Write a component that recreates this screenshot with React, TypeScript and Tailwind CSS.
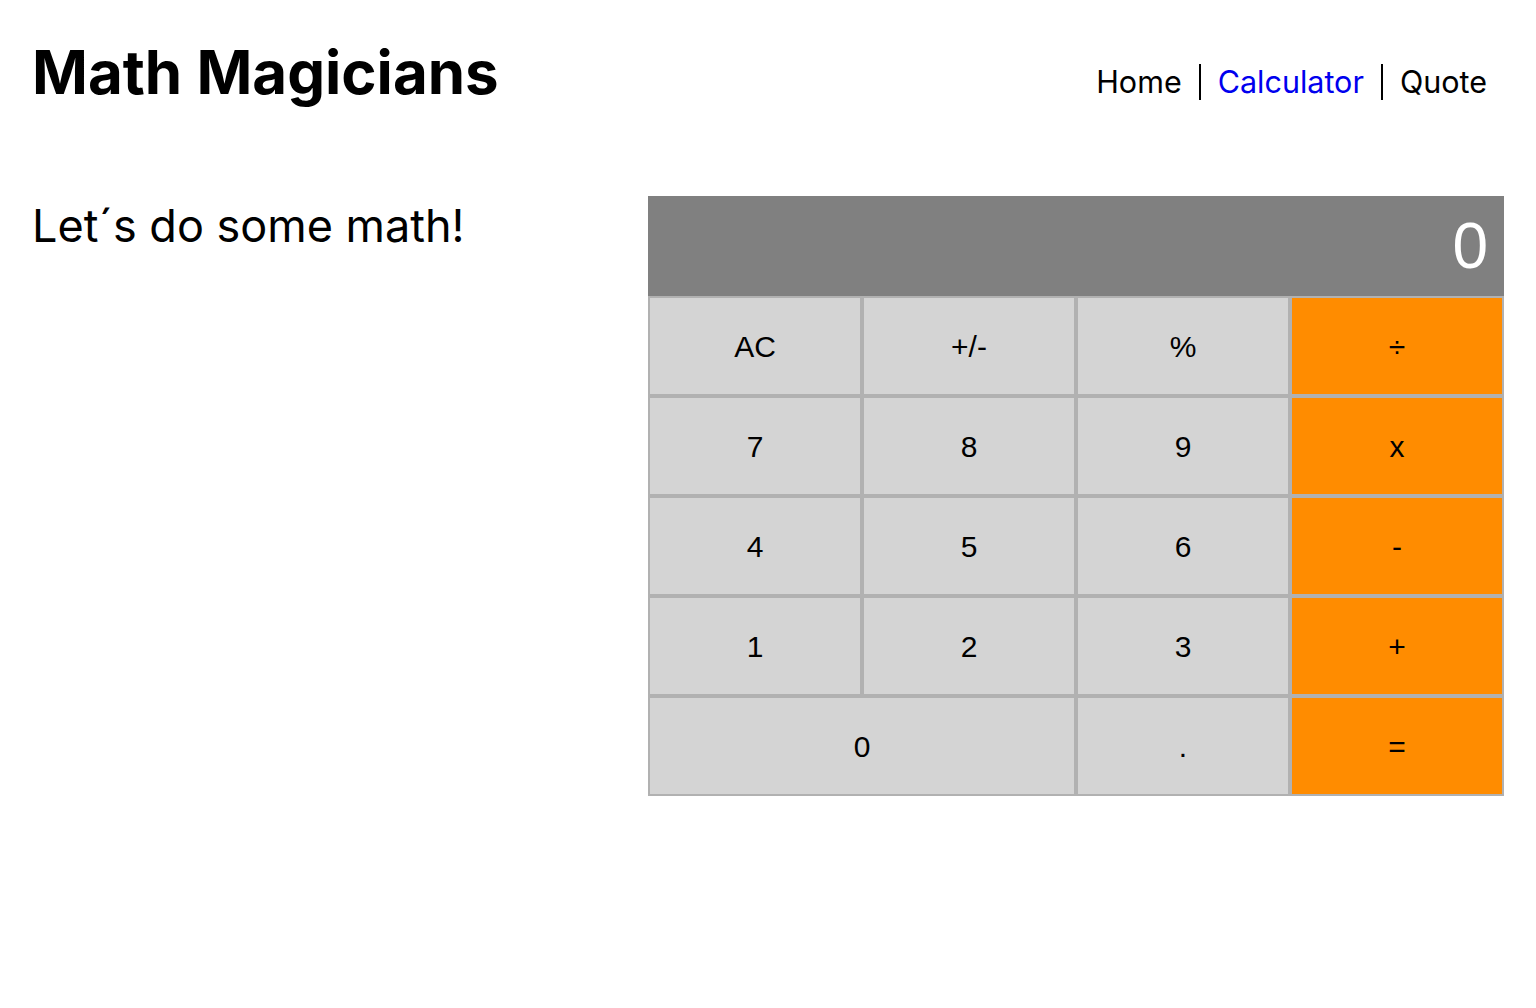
const keys: { label: string; wide?: boolean; op?: boolean }[] = [
  { label: "AC" },
  { label: "+/-" },
  { label: "%" },
  { label: "÷", op: true },
  { label: "7" },
  { label: "8" },
  { label: "9" },
  { label: "x", op: true },
  { label: "4" },
  { label: "5" },
  { label: "6" },
  { label: "-", op: true },
  { label: "1" },
  { label: "2" },
  { label: "3" },
  { label: "+", op: true },
  { label: "0", wide: true },
  { label: "." },
  { label: "=", op: true },
];

export default function App() {
  return (
    <div className="min-h-screen bg-white px-8 text-black [font-family:Inter,'Noto_Sans',sans-serif]">
      <header className="flex items-start justify-between pt-[34px]">
        <h1 className="text-[60px] font-bold leading-[76px]">Math Magicians</h1>
        <nav className="mt-[30px] mr-[17px] flex items-center text-[30.5px] leading-[36px]">
          <NavLink label="Home" />
          <NavLink label="Calculator" active border />
          <NavLink label="Quote" border last />
        </nav>
      </header>

      <main className="mt-[86px] flex justify-between">
        <h2 className="text-[45px] leading-[60px]">Let´s do some math!</h2>
        <Calculator />
      </main>
    </div>
  );
}

function NavLink({
  label,
  active,
  border,
  last,
}: {
  label: string;
  active?: boolean;
  border?: boolean;
  last?: boolean;
}) {
  return (
    <a
      href="#"
      className={`${border ? "border-l-2 border-black" : ""} ${last ? "pl-[17px]" : "px-[17px]"} ${
        active ? "text-[#0000ee]" : "text-black"
      }`}
    >
      {label}
    </a>
  );
}

function Calculator() {
  return (
    <div className="w-[856px] [font-family:'Liberation_Sans',Arial,sans-serif]">
      <div className="flex h-[100px] items-center justify-end bg-[#808080] pr-[16px] text-[64px] text-white">
        0
      </div>
      <div className="grid grid-cols-4">
        {keys.map((k) => (
          <button
            key={k.label}
            className={`flex h-[100px] items-center justify-center border-2 border-[#b1b1b1] text-[30px] text-black ${
              k.wide ? "col-span-2" : ""
            } ${k.op ? "bg-[#ff8c00]" : "bg-[#d4d4d4]"}`}
          >
            {k.label}
          </button>
        ))}
      </div>
    </div>
  );
}
